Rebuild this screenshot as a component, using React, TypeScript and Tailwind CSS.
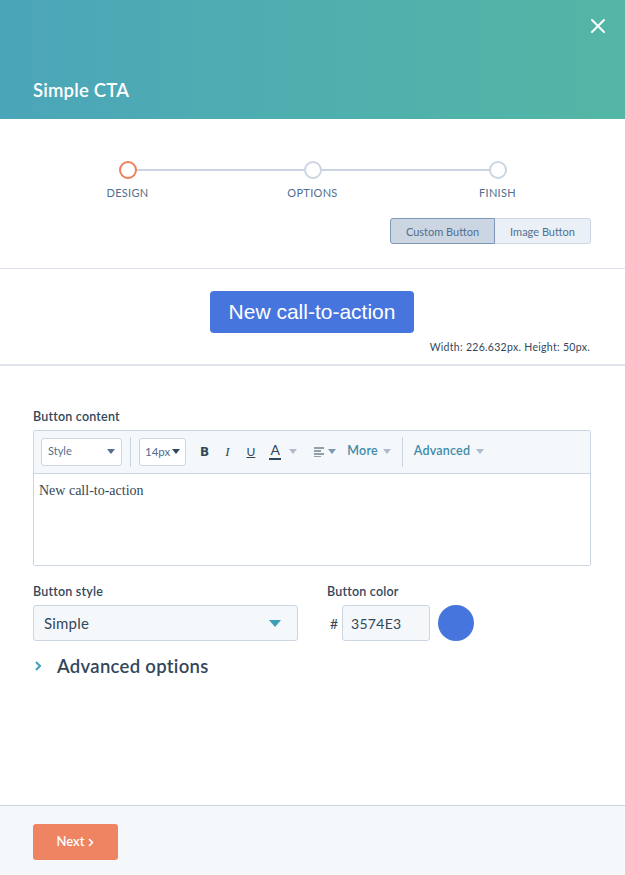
import React from "react";

const Caret = ({ className = "" }: { className?: string }) => (
  <svg width="8" height="5" viewBox="0 0 8 5" className={className}>
    <path d="M0 0h8L4 5z" fill="currentColor" />
  </svg>
);

export default function App() {
  const font = { fontFamily: "Lato, 'Open Sans', sans-serif" };
  return (
    <div className="w-[625px] h-[875px] flex flex-col bg-white text-[#33475b]" style={font}>
      {/* Header */}
      <div className="h-[119px] shrink-0 bg-gradient-to-r from-[#4ba5b9] via-[#4fafae] to-[#54b6a5] flex flex-col justify-between px-[33px] pt-[18px] pb-[20px]">
        <div className="flex justify-end -mr-[14px]">
          <svg width="16" height="16" viewBox="0 0 16 16">
            <path d="M2 2L14 14M14 2L2 14" stroke="white" strokeWidth="2" strokeLinecap="round" />
          </svg>
        </div>
        <div className="text-white text-[18.5px] tracking-[0.2px] font-semibold leading-none">Simple CTA</div>
      </div>

      {/* Stepper */}
      <div className="h-[150px] shrink-0 border-b border-[#dfe3eb] flex flex-col">
        <div className="relative mt-[42px] mx-auto w-[430px]">
          <div className="absolute left-[22px] right-[22px] top-[8px] h-[2px] bg-[#cbd6e2]" />
          <div className="relative flex justify-between">
            {[
              { label: "DESIGN", active: true },
              { label: "OPTIONS", active: false },
              { label: "FINISH", active: false },
            ].map((s) => (
              <div key={s.label} className="flex flex-col items-center w-[60px]">
                <div
                  className={
                    "w-[18px] h-[18px] rounded-full bg-white border-2 " +
                    (s.active ? "border-[#f07f5a]" : "border-[#cbd6e2]")
                  }
                />
                <div className="mt-[8px] text-[11px] tracking-[0.3px] text-[#516f90] leading-none">{s.label}</div>
              </div>
            ))}
          </div>
        </div>
        <div className="flex justify-end mr-[34px] mt-[20px]">
          <div className="flex text-[11px] text-[#516f90] leading-none">
            <div className="w-[105px] h-[26px] flex items-center justify-center bg-[#cbd6e2] border border-[#7c98b6] rounded-l-[3px]">
              Custom Button
            </div>
            <div className="w-[96px] h-[26px] flex items-center justify-center bg-[#eaf0f6] border border-l-0 border-[#cbd6e2] rounded-r-[3px]">
              Image Button
            </div>
          </div>
        </div>
      </div>

      {/* Preview */}
      <div className="h-[97px] shrink-0 border-b-2 border-[#dfe3eb] flex flex-col">
        <div className="flex justify-center mt-[22px] pr-[1px]">
          <div
            className="w-[204px] h-[42px] rounded-[4px] bg-[#4775de] text-white text-[21px] flex items-center justify-center"
            style={{ fontFamily: "'Liberation Sans', Arial, sans-serif" }}
          >
            New call-to-action
          </div>
        </div>
        <div className="flex justify-end mr-[35px] mt-[9px] text-[10.5px] tracking-[0.3px] text-[#33475b] leading-none">
          Width: 226.632px. Height: 50px.
        </div>
      </div>

      {/* Form */}
      <div className="flex-1 px-[33px] pt-[45px]">
        <div className="text-[12.5px] tracking-[0.2px] font-semibold leading-none mb-[6px]">Button content</div>
        <div className="w-[558px] border border-[#cbd6e2] rounded-[2px]">
          <div className="h-[43px] bg-[#f5f8fa] border-b border-[#cbd6e2] flex items-center px-[7px] text-[11px] text-[#516f90]">
            <div className="w-[81px] h-[28px] bg-white border border-[#cbd6e2] rounded-[3px] flex items-center justify-between px-[6px]">
              <span>Style</span>
              <Caret className="text-[#516f90]" />
            </div>
            <div className="w-px h-[30px] bg-[#cbd6e2] mx-[8px]" />
            <div className="w-[47px] h-[28px] bg-white border border-[#cbd6e2] rounded-[3px] flex items-center justify-between px-[5px]">
              <span className="text-[11.5px]">14px</span>
              <Caret className="text-[#33475b]" />
            </div>
            <span className="ml-[14px] font-bold text-[12px] text-[#33475b]" style={{ fontFamily: "'DejaVu Sans', sans-serif" }}>B</span>
            <span className="ml-[16px] italic text-[13px] text-[#33475b]" style={{ fontFamily: "'Liberation Serif', serif" }}>I</span>
            <span className="ml-[17px] underline text-[12px] text-[#33475b]">U</span>
            <span className="ml-[14px] flex flex-col items-center leading-none text-[#33475b]">
              <span className="text-[14px]">A</span>
              <span className="w-[12px] h-[2px] bg-[#33475b] mt-[1px]" />
            </span>
            <Caret className="ml-[8px] text-[#b0bccb]" />
            <svg width="11" height="10" viewBox="0 0 11 10" className="ml-[17px]">
              <path d="M0 1h10M0 4h7M0 7h10M0 10h7" stroke="#33475b" strokeWidth="1.2" />
            </svg>
            <Caret className="ml-[3px] text-[#7c98b6]" />
            <span className="ml-[11px] text-[12.5px] tracking-[0.2px] font-semibold text-[#3d8ba9]">More</span>
            <Caret className="ml-[5px] text-[#b0bccb]" />
            <div className="w-px h-[30px] bg-[#cbd6e2] ml-[11px] mr-[11px]" />
            <span className="text-[12.5px] tracking-[0.2px] font-semibold text-[#3d8ba9]">Advanced</span>
            <Caret className="ml-[6px] text-[#b0bccb]" />
          </div>
          <div className="h-[91px] bg-white px-[5px] pt-[6px] text-[14px] text-[#33475b]" style={{ fontFamily: "'Liberation Serif', Georgia, serif" }}>
            New call-to-action
          </div>
        </div>

        <div className="flex mt-[20px]">
          <div className="w-[294px]">
            <div className="text-[12.5px] tracking-[0.2px] font-semibold leading-none mb-[7px]">Button style</div>
            <div className="w-[265px] h-[36px] bg-[#f5f8fa] border border-[#cbd6e2] rounded-[3px] flex items-center justify-between pl-[10px] pr-[16px]">
              <span className="text-[15px] tracking-[0.2px]">Simple</span>
              <svg width="12" height="7" viewBox="0 0 12 7">
                <path d="M0 0h12L6 7z" fill="#3d9fb5" />
              </svg>
            </div>
          </div>
          <div>
            <div className="text-[12.5px] tracking-[0.2px] font-semibold leading-none mb-[7px]">Button color</div>
            <div className="flex items-center">
              <span className="text-[14px] w-[12px] ml-[3px]">#</span>
              <div className="w-[88px] h-[36px] bg-[#f5f8fa] border border-[#cbd6e2] rounded-[3px] flex items-center px-[8px] text-[14px] tracking-[0.3px]">
                3574E3
              </div>
              <div className="w-[36px] h-[36px] rounded-full bg-[#4775de] ml-[8px]" />
            </div>
          </div>
        </div>

        <div className="flex items-center mt-[16px]">
          <svg width="8" height="12" viewBox="0 0 8 12" className="ml-[1px]">
            <path d="M2 2l4 4-4 4" stroke="#3d9fb5" strokeWidth="2" fill="none" />
          </svg>
          <span className="ml-[15px] text-[18.5px] tracking-[0.3px] font-semibold leading-none">Advanced options</span>
        </div>
      </div>

      {/* Footer */}
      <div className="h-[70px] shrink-0 bg-[#f5f8fa] border-t border-[#cbd6e2] px-[33px] pt-[18px]">
        <div className="w-[85px] h-[36px] rounded-[3px] bg-[#ef8463] text-white text-[13px] font-semibold flex items-center justify-center gap-[4px]">
          <span>Next</span>
          <svg width="6" height="9" viewBox="0 0 6 9">
            <path d="M1 1l3.5 3.5L1 8" stroke="white" strokeWidth="1.5" fill="none" />
          </svg>
        </div>
      </div>
    </div>
  );
}
